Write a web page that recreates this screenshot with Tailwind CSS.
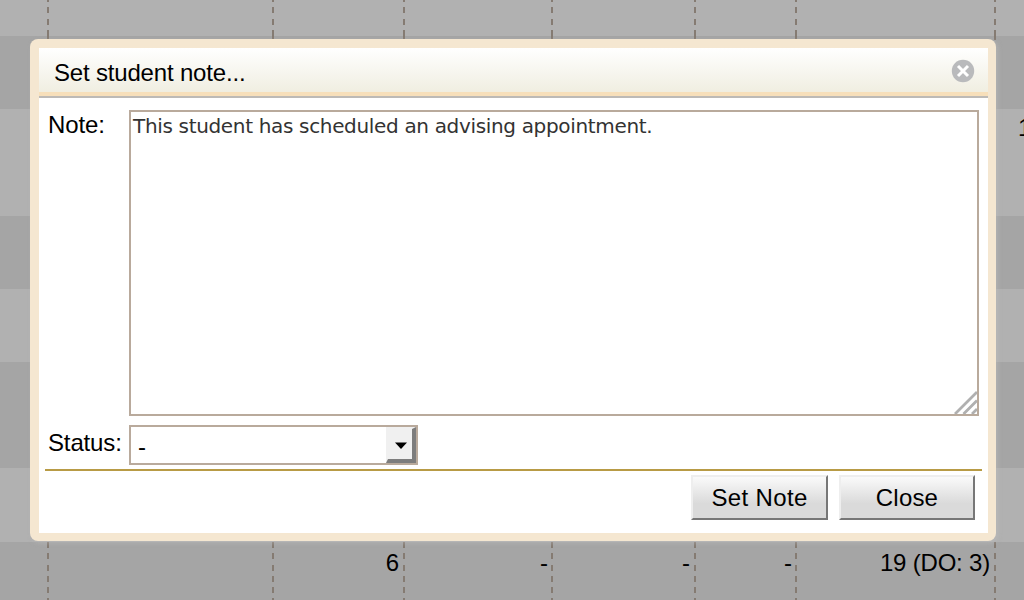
<!DOCTYPE html>
<html lang="en">
<head>
<meta charset="utf-8">
<title>Set student note</title>
<script src="https://cdn.jsdelivr.net/npm/@tailwindcss/browser@4"></script>
</head>
<body class="relative h-[600px] w-[1024px] overflow-hidden bg-[#b1b1b1] font-['Liberation_Sans',sans-serif] text-[24px] leading-[28px] text-black">
<!-- dimmed table -->
<div class="flex h-[600px] flex-col">
  <div class="grid h-[36px] shrink-0 grid-cols-[49px_225px_131px_148px_143px_101px_199px_28px] bg-[#b1b1b1]">
    <div class="flex justify-end"><i class="w-0.5 bg-[repeating-linear-gradient(to_bottom,#857b72_0_6px,transparent_6px_11.3px)] bg-[position:0_-4px]"></i></div>
    <div class="flex justify-end"><i class="w-0.5 bg-[repeating-linear-gradient(to_bottom,#857b72_0_6px,transparent_6px_11.3px)] bg-[position:0_-4px]"></i></div>
    <div class="flex justify-end"><i class="w-0.5 bg-[repeating-linear-gradient(to_bottom,#857b72_0_6px,transparent_6px_11.3px)] bg-[position:0_-4px]"></i></div>
    <div class="flex justify-end"><i class="w-0.5 bg-[repeating-linear-gradient(to_bottom,#857b72_0_6px,transparent_6px_11.3px)] bg-[position:0_-4px]"></i></div>
    <div class="flex justify-end"><i class="w-0.5 bg-[repeating-linear-gradient(to_bottom,#857b72_0_6px,transparent_6px_11.3px)] bg-[position:0_-4px]"></i></div>
    <div class="flex justify-end"><i class="w-0.5 bg-[repeating-linear-gradient(to_bottom,#857b72_0_6px,transparent_6px_11.3px)] bg-[position:0_-4px]"></i></div>
    <div class="flex justify-end"><i class="w-0.5 bg-[repeating-linear-gradient(to_bottom,#857b72_0_6px,transparent_6px_11.3px)] bg-[position:0_-4px]"></i></div>
  </div>
  <div class="grid h-[73px] shrink-0 grid-cols-[49px_225px_131px_148px_143px_101px_199px_28px] bg-[#a5a5a5]">
    <div class="flex justify-end"><i class="h-1 w-0.5 bg-[#857b72]"></i></div>
    <div class="flex justify-end"><i class="h-1 w-0.5 bg-[#857b72]"></i></div>
    <div class="flex justify-end"><i class="h-1 w-0.5 bg-[#857b72]"></i></div>
    <div class="flex justify-end"><i class="h-1 w-0.5 bg-[#857b72]"></i></div>
    <div class="flex justify-end"><i class="h-1 w-0.5 bg-[#857b72]"></i></div>
    <div class="flex justify-end"><i class="h-1 w-0.5 bg-[#857b72]"></i></div>
    <div class="flex justify-end"><i class="h-1 w-0.5 bg-[#857b72]"></i></div>
  </div>
  <div class="h-[107px] shrink-0 overflow-hidden bg-[#b1b1b1] pt-[5px] pl-[1018px]">1</div>
  <div class="h-[73px] shrink-0 bg-[#a5a5a5]"></div>
  <div class="h-[73px] shrink-0 bg-[#b1b1b1]"></div>
  <div class="h-[106px] shrink-0 bg-[#a5a5a5]"></div>
  <div class="h-[74px] shrink-0 bg-[#b1b1b1]"></div>
  <div class="grid h-[58px] shrink-0 grid-cols-[49px_225px_131px_148px_143px_101px_199px_28px] bg-[#a5a5a5]">
    <div class="flex justify-end"><i class="w-0.5 bg-[repeating-linear-gradient(to_bottom,#857b72_0_6px,transparent_6px_11.3px)]"></i></div>
    <div class="flex justify-end"><i class="w-0.5 bg-[repeating-linear-gradient(to_bottom,#857b72_0_6px,transparent_6px_11.3px)]"></i></div>
    <div class="flex justify-end gap-1"><span class="pt-[7px]">6</span><i class="w-0.5 bg-[repeating-linear-gradient(to_bottom,#857b72_0_6px,transparent_6px_11.3px)]"></i></div>
    <div class="flex justify-end gap-[3px]"><span class="pt-[7px]">-</span><i class="w-0.5 bg-[repeating-linear-gradient(to_bottom,#857b72_0_6px,transparent_6px_11.3px)]"></i></div>
    <div class="flex justify-end gap-1"><span class="pt-[7px]">-</span><i class="w-0.5 bg-[repeating-linear-gradient(to_bottom,#857b72_0_6px,transparent_6px_11.3px)]"></i></div>
    <div class="flex justify-end gap-[3px]"><span class="pt-[7px]">-</span><i class="w-0.5 bg-[repeating-linear-gradient(to_bottom,#857b72_0_6px,transparent_6px_11.3px)]"></i></div>
    <div class="flex justify-end gap-1"><span class="pt-[7px] tracking-[-0.2px] whitespace-nowrap">19 (DO: 3)</span><i class="w-0.5 bg-[repeating-linear-gradient(to_bottom,#857b72_0_6px,transparent_6px_11.3px)]"></i></div>
  </div>
</div>
<!-- dialog -->
<div class="absolute top-[39px] left-[30px] flex h-[502px] w-[966px] flex-col rounded-[8px] bg-[#f5e7d1] pt-[9px] pr-2 pb-2 pl-[9px] shadow-[2px_2px_4px_rgba(190,190,190,0.5)]">
  <div class="flex h-[50px] shrink-0 items-start justify-between border-b-2 border-[#bdbab6] bg-white">
    <div class="flex h-12 w-full justify-between border-b-4 border-[#f7dfba] bg-linear-to-b from-white to-[#f0eee1] pt-[11px] pr-[13px] pl-[15px]">
      <span class="tracking-[-0.18px]">Set student note...</span>
      <svg class="block h-6 w-6" viewBox="0 0 24 24"><circle cx="12" cy="12" r="11.2" fill="#b9babc"/><path d="M7 7l10 10M17 7L7 17" stroke="#fff" stroke-width="3"/></svg>
    </div>
  </div>
  <div class="flex grow flex-col bg-white">
    <div class="flex pt-3 pl-[9px]">
      <label class="w-[81px] pt-[1px] tracking-[-0.1px]">Note:</label>
      <div class="relative h-[306px] w-[850px] border-2 border-[#b9aa9c] bg-white pl-0.5 font-['DejaVu_Sans',sans-serif] text-[20px] text-[#333]">
        <span class="tracking-[-0.335px] whitespace-nowrap">This student has scheduled an advising appointment.</span>
        <svg class="absolute right-0 bottom-0 h-[23px] w-[23px]" viewBox="0 0 23 23" fill="none" stroke="#b0b0b0" stroke-width="2.8"><path d="M1 23L23 1M9.500 23L23 9.500M18 23L23 18"/></svg>
      </div>
    </div>
    <div class="flex pt-[9px] pl-[9px]">
      <label class="w-[81px] pt-[4px] tracking-[-0.15px]">Status:</label>
      <div class="flex h-10 w-[289px] justify-between border-2 border-[#b9aa9c] pl-[7px]">
        <span class="pt-[6px]">-</span>
        <div class="flex h-9 w-[30px] items-center justify-center border-t-2 border-r-4 border-b-4 border-l-2 border-t-[#f0f0f0] border-r-[#7d7d7d] border-b-[#7d7d7d] border-l-[#f0f0f0] bg-[#f0f0f0]">
          <svg class="mt-0.5 ml-0.5 h-[7px] w-3" viewBox="0 0 12 7"><path d="M0 .5h12L6 7z"/></svg>
        </div>
      </div>
    </div>
    <div class="mt-[4px] mr-[6px] ml-[6px] h-0.5 bg-[#b89b45]"></div>
    <div class="flex justify-end gap-[11px] pt-[4px] pr-[13px]">
      <div class="h-[45px] w-[137px] border-2 border-t-[#eee] border-r-[#777] border-b-[#777] border-l-[#eee] bg-linear-to-b from-[#fafafa] to-[#dadada] to-65% pt-[7px] text-center tracking-[0.35px]">Set Note</div>
      <div class="h-[45px] w-[136px] border-2 border-t-[#eee] border-r-[#777] border-b-[#777] border-l-[#eee] bg-linear-to-b from-[#fafafa] to-[#dadada] to-65% pt-[7px] text-center tracking-[0.2px]">Close</div>
    </div>
  </div>
</div>
</body>
</html>
